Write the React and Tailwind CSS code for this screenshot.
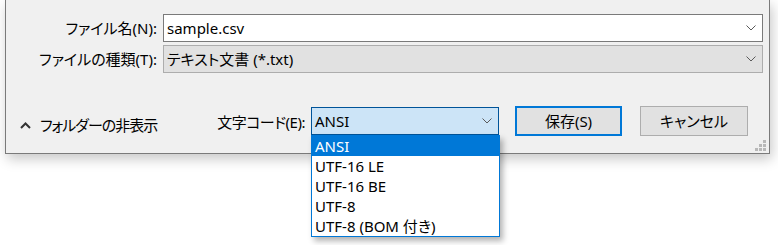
const font = { fontFamily: '"Noto Sans", "Noto Sans CJK JP", sans-serif' }

function Chevron() {
  return (
    <svg width="10" height="6" viewBox="0 0 10 6" fill="none" stroke="#5a5a5a" strokeWidth="1">
      <polyline points="0.5 0.5 5 5 9.5 0.5" />
    </svg>
  )
}

function Grip() {
  const dots = [
    [8, 0],
    [4, 4], [8, 4],
    [0, 8], [4, 8], [8, 8],
  ]
  return (
    <svg width="11" height="11" viewBox="0 0 11 11">
      {dots.map(([x, y], i) => (
        <rect key={i} x={x} y={y} width="3" height="3" fill="#b8b8b8" />
      ))}
    </svg>
  )
}

const encodings = ['ANSI', 'UTF-16 LE', 'UTF-16 BE', 'UTF-8', 'UTF-8 (BOM 付き)']

export default function App() {
  return (
    <div
      className="relative w-[778px] h-[245px] bg-white overflow-hidden text-[15px] text-black leading-none whitespace-nowrap [font-feature-settings:'palt']"
      style={font}
    >
      {/* Dialog */}
      <div className="ml-[5px] w-[765px] h-[154px] bg-[#f0f0f0] border border-t-0 border-[#7a7a7a] shadow-[2px_5px_12px_rgba(0,0,0,0.22)] pt-[14px]">
        {/* File name */}
        <div className="flex items-center">
          <label className="w-[152px] text-right pr-[1px]">ファイル名(N):</label>
          <div className="ml-[5px] w-[600px] h-[28px] bg-white border border-[#7a7a7a] flex items-center pl-[3px] pr-[6px]">
            <span className="flex-1">sample.csv</span>
            <Chevron />
          </div>
        </div>

        {/* File type */}
        <div className="flex items-center mt-[3px]">
          <label className="w-[152px] text-right pr-[1px]">ファイルの種類(T):</label>
          <div className="ml-[5px] w-[600px] h-[28px] bg-[#e1e1e1] border border-[#adadad] flex items-center pl-[3px] pr-[6px]">
            <span className="flex-1">テキスト文書 (*.txt)</span>
            <Chevron />
          </div>
        </div>

        {/* Bottom row */}
        <div className="flex items-center mt-[33px] h-[30px]">
          <div className="w-[200px] flex items-center pl-[14px] mt-[8px]">
            <svg width="11" height="7" viewBox="0 0 11 7" fill="none" stroke="#333" strokeWidth="2">
              <polyline points="1 6 5.5 1.5 10 6" />
            </svg>
            <span className="ml-[9px] tracking-[-1px]">フォルダーの非表示</span>
          </div>

          <label className="w-[100px] text-right pr-[1px] mt-[2px] tracking-[-0.5px]">文字コード(E):</label>

          <div className="ml-[5px] w-[188px] h-[28px] bg-[#cce4f7] border border-[#005499] flex items-center pl-[3px] pr-[6px]">
            <span className="flex-1">ANSI</span>
            <Chevron />
          </div>

          <button className="ml-[16px] w-[107px] h-[30px] bg-[#e1e1e1] border-2 border-[#0078d7]">保存(S)</button>
          <button className="ml-[18px] w-[108px] h-[30px] bg-[#e1e1e1] border border-[#adadad]">キャンセル</button>
        </div>

        <div className="flex justify-end pr-[3px] mt-[4px]">
          <Grip />
        </div>
      </div>

      {/* Dropdown list */}
      <ul className="absolute left-[311px] top-[135px] w-[189px] border border-[#0078d7] bg-white shadow-[3px_4px_6px_rgba(0,0,0,0.3)]">
        {encodings.map((e, i) => (
          <li
            key={e}
            className={`h-[20px] flex items-center pl-[3px] ${i === 0 ? 'bg-[#0078d7] text-white' : ''}`}
          >
            {e}
          </li>
        ))}
      </ul>
    </div>
  )
}
